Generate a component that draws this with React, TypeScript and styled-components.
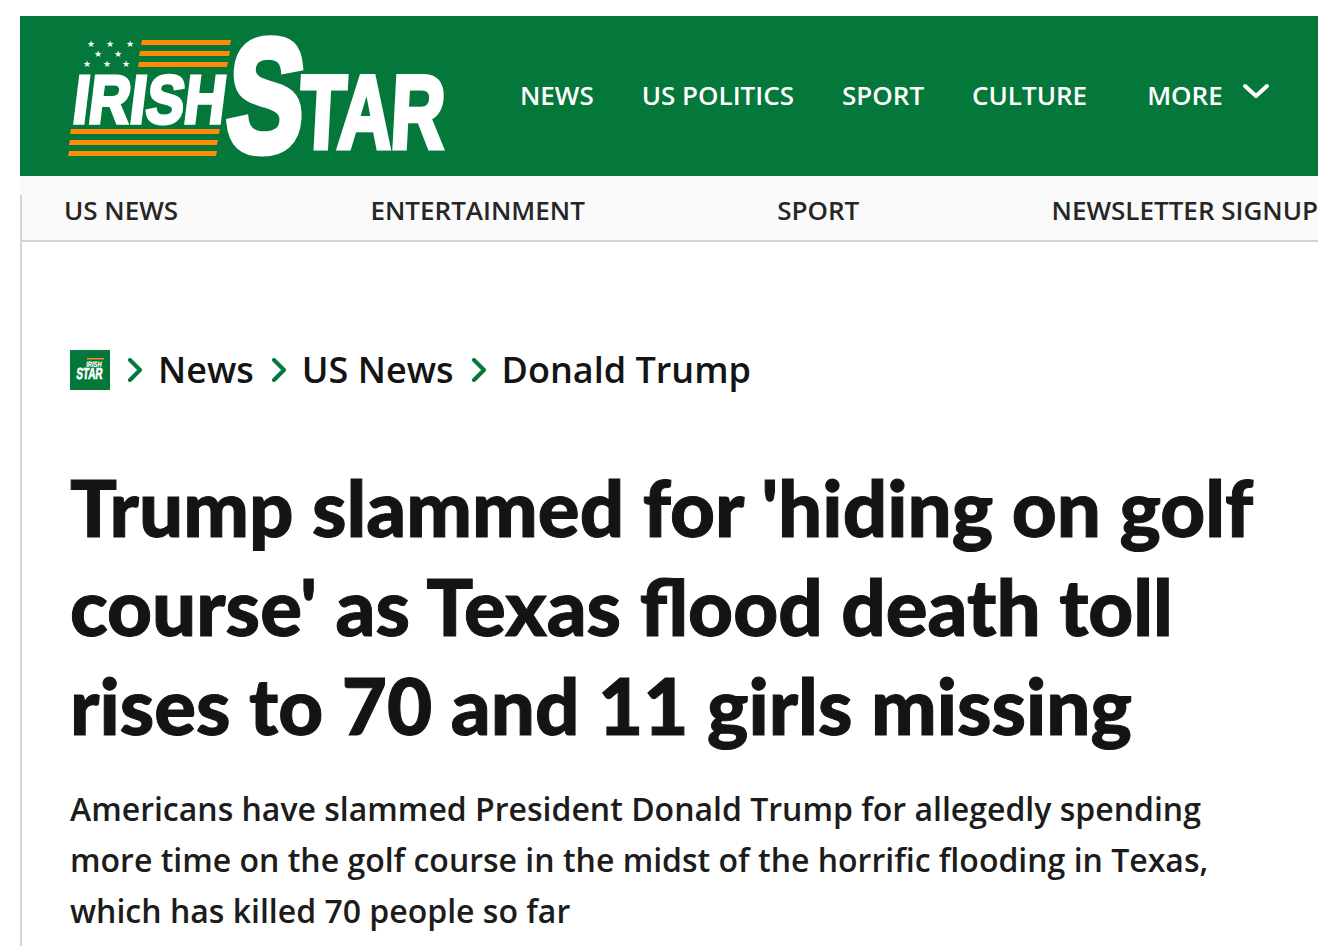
import { createGlobalStyle, styled } from 'styled-components';

const GlobalStyle = createGlobalStyle`
  html, body {
    margin: 0;
    padding: 0;
    background: #fff;
    overflow: hidden;
  }
  body {
    font-family: "Open Sans", "Noto Sans", sans-serif;
    color: #141414;
  }
`;

const Page = styled.div`
  padding: 16px 0 0 20px;
  height: 930px;
  overflow: hidden;
`;

const TopBar = styled.header`
  height: 160px;
  background: #04773b;
  display: flex;
  align-items: flex-start;
  padding-left: 48px;
  color: #fff;
`;

const LogoSvg = styled.svg`
  display: block;
  flex: none;
  margin-top: 20px;
  overflow: visible;
`;

const MainNav = styled.nav`
  display: flex;
  align-items: center;
  gap: 48px;
  margin-left: 72px;
  margin-top: 59px;
  font-size: 26px;
  font-weight: 600;
  line-height: 40px;
`;

const MainLink = styled.a`
  color: #fff;
  white-space: nowrap;
`;

const MoreLink = styled(MainLink)`
  display: flex;
  align-items: flex-start;
  gap: 20px;
  margin-left: 12px;
`;

const MoreChevron = styled.svg`
  display: block;
  margin-top: 8px;
`;

const SubNav = styled.nav`
  position: relative;
  height: 66px;
  background: #fafafa;
  border-bottom: 2px solid #d4d4d4;
  display: flex;
  align-items: center;
  justify-content: space-between;
  padding: 3px 0 0 44px;
  box-sizing: border-box;
  font-size: 26px;
  font-weight: 600;
  color: #262626;

  &::before {
    content: '';
    position: absolute;
    left: 0;
    top: 19px;
    bottom: -2px;
    width: 2px;
    background: #d4d4d4;
  }
`;

const SubLink = styled.a`
  white-space: nowrap;
`;

const Article = styled.article`
  border-left: 2px solid #d4d4d4;
  padding: 108px 40px 0 48px;
  height: 700px;
`;

const Crumbs = styled.div`
  display: flex;
  align-items: center;
  height: 38px;
  padding-bottom: 2px;
  font-size: 36px;
  font-weight: 600;
  color: #141414;
`;

const HomeTile = styled.div`
  width: 40px;
  height: 40px;
  background: #04773b;
  display: flex;
  align-items: center;
  justify-content: center;
  margin: 2px 18px 0 0;
`;

const CrumbChevron = styled.svg`
  display: block;
  flex: none;
  margin: 2px 16px 0 0;
`;

const Crumb = styled.span`
  margin-right: 18px;
  white-space: nowrap;
`;

const Headline = styled.h1`
  margin: 68px 0 0;
  font-family: Lato, "Noto Sans", sans-serif;
  font-weight: 900;
  font-size: 78px;
  line-height: 99px;
  color: #141414;
  -webkit-text-stroke: 1px #141414;
`;

const Standfirst = styled.p`
  margin: 28px 0 0;
  font-size: 32px;
  font-weight: 600;
  line-height: 51px;
  color: #1c1c1c;
`;

const TileSvg = styled.svg`
  display: block;
  overflow: visible;
  margin-top: -3px;
`;

const Logo = () => (
  <LogoSvg width="380" height="122" viewBox="68 36 380 122" role="img" aria-label="Irish Star">
    <g fill="#fe8a05">
      <polygon points="142,40 231,40 230,45 141,45" />
      <polygon points="140,51 230,51 229,56 139,56" />
      <polygon points="139,62 228,62 227,67 138,67" />
      <polygon points="71,129 220,129 219,134 70,134" />
      <polygon points="70,140 218,140 217,145 69,145" />
      <polygon points="69,151 217,151 216,156 68,156" />
    </g>
    <g fill="#fff" fontSize="9" fontFamily="'DejaVu Sans', sans-serif" textAnchor="middle">
      <text x="91" y="47">★</text>
      <text x="110" y="47">★</text>
      <text x="130" y="47">★</text>
      <text x="98" y="57">★</text>
      <text x="118" y="57">★</text>
      <text x="87" y="67">★</text>
      <text x="107" y="67">★</text>
      <text x="126" y="67">★</text>
    </g>
    <g fill="#fff" stroke="#fff" fontFamily="'Liberation Sans', Arial, sans-serif" fontWeight="700">
      <text transform="translate(71 123) skewX(-7) scale(0.84 1)" fontSize="68" strokeWidth="3.5">
        IRISH
      </text>
      <text transform="translate(224 151) skewX(-4) scale(0.72 1)" fontSize="160" strokeWidth="8">
        S
      </text>
      <text transform="translate(298 148) skewX(-3) scale(0.72 1)" fontSize="104" strokeWidth="5" letterSpacing="-2">
        TAR
      </text>
    </g>
  </LogoSvg>
);

// the tile in the breadcrumb carries the stacked form of the logo
const TileLogo = () => (
  <TileSvg width="30" height="24" viewBox="0 0 30 24" role="img" aria-label="Irish Star">
    <rect x="12" y="1" width="17" height="1.5" fill="#fe8a05" />
    <g fill="#fff" stroke="#fff" fontFamily="'Liberation Sans', Arial, sans-serif" fontWeight="700">
      <text transform="translate(11 10) skewX(-7) scale(0.72 1)" fontSize="8" strokeWidth="0.2">
        IRISH
      </text>
      <text transform="translate(1 22) skewX(-5) scale(0.62 1)" fontSize="16" strokeWidth="0.7">
        STAR
      </text>
    </g>
  </TileSvg>
);

const Chevron = () => (
  <CrumbChevron width="14" height="24" viewBox="0 0 14 24" fill="none">
    <path d="M2 2l10 10L2 22" stroke="#04773b" strokeWidth="4" strokeLinecap="round" strokeLinejoin="round" />
  </CrumbChevron>
);

const App = () => {
  return (
    <Page>
      <GlobalStyle />
      <TopBar>
        <Logo />
        <MainNav>
          <MainLink>NEWS</MainLink>
          <MainLink>US POLITICS</MainLink>
          <MainLink>SPORT</MainLink>
          <MainLink>CULTURE</MainLink>
          <MoreLink>
            MORE
            <MoreChevron width="26" height="16" viewBox="0 0 26 16" fill="none">
              <path d="M2 3l11 10L24 3" stroke="#fff" strokeWidth="4" strokeLinecap="round" strokeLinejoin="round" />
            </MoreChevron>
          </MoreLink>
        </MainNav>
      </TopBar>
      <SubNav>
        <SubLink>US NEWS</SubLink>
        <SubLink>ENTERTAINMENT</SubLink>
        <SubLink>SPORT</SubLink>
        <SubLink>NEWSLETTER SIGNUP</SubLink>
      </SubNav>
      <Article>
        <Crumbs>
          <HomeTile>
            <TileLogo />
          </HomeTile>
          <Chevron />
          <Crumb>News</Crumb>
          <Chevron />
          <Crumb>US News</Crumb>
          <Chevron />
          <Crumb>Donald Trump</Crumb>
        </Crumbs>
        <Headline>
          Trump slammed for 'hiding on golf course' as Texas flood death toll rises to 70 and 11 girls missing
        </Headline>
        <Standfirst>
          Americans have slammed President Donald Trump for allegedly spending more time on the golf course in the midst
          of the horrific flooding in Texas, which has killed 70 people so far
        </Standfirst>
      </Article>
    </Page>
  );
};

export default App;
